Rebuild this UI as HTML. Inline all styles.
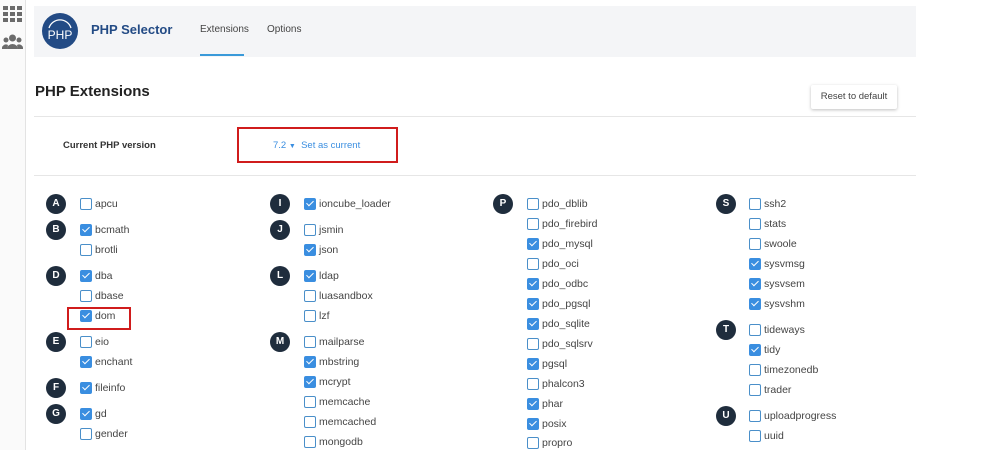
<!DOCTYPE html><html><head><style>
body{margin:0;width:1000px;height:450px;background:#fff;font-family:"Liberation Sans",sans-serif;position:relative;overflow:hidden}
.a{position:absolute}
.sb{left:0;top:0;width:25px;height:450px;background:#fafafa;border-right:1px solid #e3e3e3}
.hd{left:34px;top:6px;width:882px;height:51px;background:#f4f5f7}
.l{width:20px;height:20px;border-radius:50%;background:#1f2d3d;color:#fff;font-size:10px;font-weight:bold;text-align:center;line-height:20px}
.c{width:10px;height:10px;border:1px solid #4a8fc9;border-radius:2px;background:#fff}
.c.k{background:#3a8ee0;border-color:#3a8ee0}
.c.k:after{content:"";position:absolute;left:3px;top:0px;width:3px;height:6px;border:solid #fff;border-width:0 1.5px 1.5px 0;transform:rotate(45deg)}
.t{font-size:10.5px;color:#444}
</style></head><body>
<div class="a sb"></div>
<svg class="a" style="left:3px;top:6px" width="20" height="16"><g fill="#6b6b6b"><rect x="0" y="0" width="5" height="4"/><rect x="7" y="0" width="5" height="4"/><rect x="14" y="0" width="5" height="4"/><rect x="0" y="6" width="5" height="4"/><rect x="7" y="6" width="5" height="4"/><rect x="14" y="6" width="5" height="4"/><rect x="0" y="12" width="5" height="4"/><rect x="7" y="12" width="5" height="4"/><rect x="14" y="12" width="5" height="4"/></g></svg>
<svg class="a" style="left:2px;top:34px" width="21" height="16"><g fill="#6b6b6b"><circle cx="10.5" cy="4" r="3.5"/><circle cx="4" cy="6" r="2.5"/><circle cx="17" cy="6" r="2.5"/><path d="M5 15a5.5 5 0 0 1 11 0z"/><path d="M0 15a4 4 0 0 1 6-4l-1 4z"/><path d="M21 15a4 4 0 0 0-6-4l1 4z"/></g></svg>
<div class="a hd"></div>
<svg class="a" style="left:42px;top:13px" width="36" height="36"><circle cx="18" cy="18" r="18" fill="#234b85"/><path d="M7 15a11.5 11.5 0 0 1 22 0" fill="none" stroke="#fff" stroke-width="1.3"/><text x="18" y="26" font-family="Liberation Sans" font-size="12" fill="#fff" text-anchor="middle">PHP</text></svg>
<div class="a" style="left:91px;top:22px;font-size:13px;font-weight:bold;color:#234b85">PHP Selector</div>
<div class="a" style="left:200px;top:24px;font-size:10px;color:#444">Extensions</div>
<div class="a" style="left:200px;top:54px;width:44px;height:2px;background:#3a9ad9"></div>
<div class="a" style="left:267px;top:24px;font-size:10px;color:#444">Options</div>
<div class="a" style="left:35px;top:83px;font-size:15px;font-weight:bold;color:#222">PHP Extensions</div>
<div class="a" style="left:811px;top:85px;width:86px;height:24px;border-radius:2px;box-shadow:0 1px 3px rgba(0,0,0,.25);background:#fff;font-size:9.5px;color:#444;text-align:center;line-height:24px">Reset to default</div>
<div class="a" style="left:34px;top:116px;width:882px;height:1px;background:#e6e6e6"></div>
<div class="a" style="left:34px;top:175px;width:882px;height:1px;background:#e6e6e6"></div>
<div class="a" style="left:63px;top:140px;font-size:9.5px;font-weight:bold;color:#333">Current PHP version</div>
<div class="a" style="left:237px;top:127px;width:157px;height:32px;border:2px solid #d01c1c"></div>
<div class="a" style="left:273px;top:140px;font-size:9.5px;color:#3a8ee0">7.2 <span style="font-size:7px">▼</span>&nbsp; Set as current</div>
<div class="a" style="left:67px;top:307px;width:60px;height:19px;border:2px solid #d01c1c"></div>

<div id="g"></div>
<script>
var cols=[[46,80,[["A",204],["B",230],["D",276],["E",342],["F",388],["G",414]],[["apcu",204,0],["bcmath",230,1],["brotli",250,0],["dba",276,1],["dbase",296,0],["dom",316,1],["eio",342,0],["enchant",362,1],["fileinfo",388,1],["gd",414,1],["gender",434,0]]],
[270,304,[["I",204],["J",230],["L",276],["M",342]],[["ioncube_loader",204,1],["jsmin",230,0],["json",250,1],["ldap",276,1],["luasandbox",296,0],["lzf",316,0],["mailparse",342,0],["mbstring",362,1],["mcrypt",382,1],["memcache",402,0],["memcached",422,0],["mongodb",442,0]]],
[493,527,[["P",204]],[["pdo_dblib",204,0],["pdo_firebird",224,0],["pdo_mysql",244,1],["pdo_oci",264,0],["pdo_odbc",284,1],["pdo_pgsql",304,1],["pdo_sqlite",324,1],["pdo_sqlsrv",344,0],["pgsql",364,1],["phalcon3",384,0],["phar",404,1],["posix",424,1],["propro",443,0]]],
[716,749,[["S",204],["T",330],["U",416]],[["ssh2",204,0],["stats",224,0],["swoole",244,0],["sysvmsg",264,1],["sysvsem",284,1],["sysvshm",304,1],["tideways",330,0],["tidy",350,1],["timezonedb",370,0],["trader",390,0],["uploadprogress",416,0],["uuid",436,0]]]];
var h="";cols.forEach(function(c){c[2].forEach(function(L){h+='<div class="a l" style="left:'+c[0]+'px;top:'+(L[1]-10)+'px">'+L[0]+'</div>'});
c[3].forEach(function(i){h+='<div class="a c'+(i[2]?' k':'')+'" style="left:'+c[1]+'px;top:'+(i[1]-6)+'px"></div><div class="a t" style="left:'+(c[1]+15)+'px;top:'+(i[1]-6)+'px">'+i[0]+'</div>'})});
document.getElementById("g").innerHTML=h;
</script>
</body></html>
